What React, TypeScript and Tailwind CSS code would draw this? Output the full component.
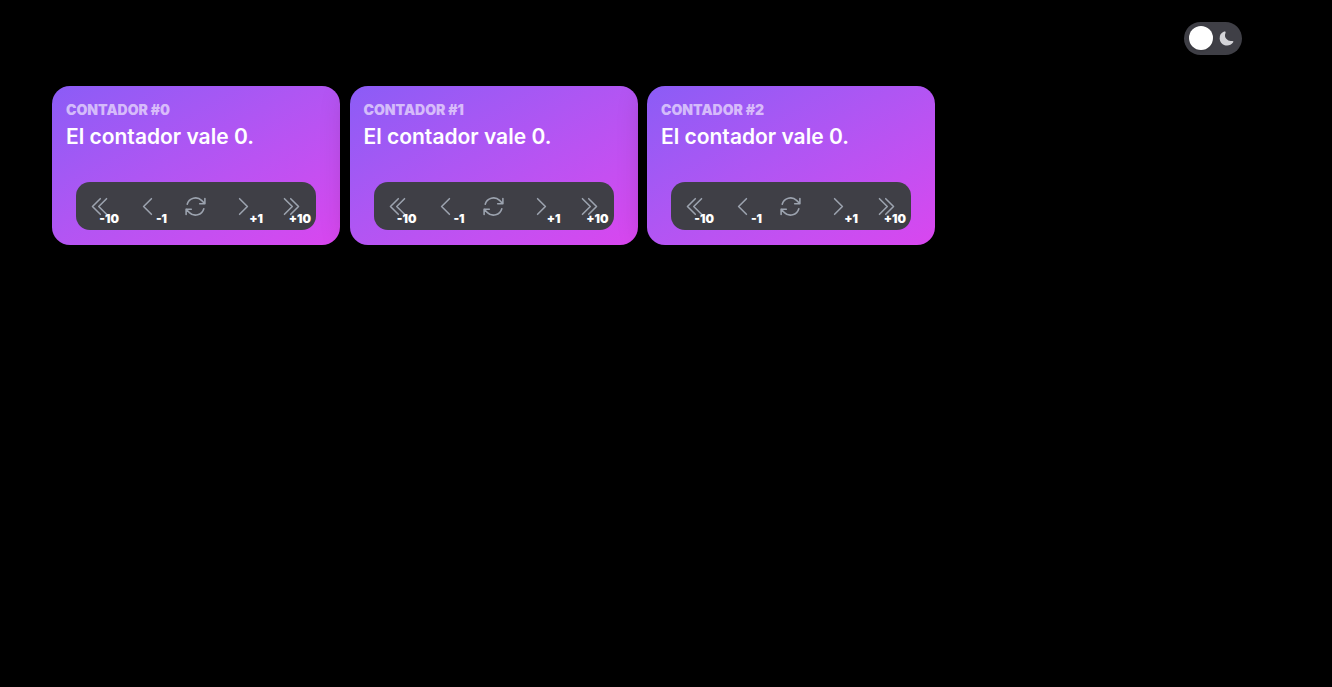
import { useState } from "react";
import type { ReactNode } from "react";

const paths = {
  back10: "m18.75 4.5-7.5 7.5 7.5 7.5m-6-15L5.25 12l7.5 7.5",
  back1: "M15.75 19.5 8.25 12l7.5-7.5",
  reset:
    "M16.023 9.348h4.992v-.001M2.985 19.644v-4.992m0 0h4.992m-4.993 0 3.181 3.183a8.25 8.25 0 0 0 13.803-3.7M4.031 9.865a8.25 8.25 0 0 1 13.803-3.7l3.181 3.182m0-4.991v4.99",
  next1: "m8.25 4.5 7.5 7.5-7.5 7.5",
  next10: "m5.25 4.5 7.5 7.5-7.5 7.5m6-15 7.5 7.5-7.5 7.5",
};

function Icon({ d }: { d: string }) {
  return (
    <svg
      className="size-[25px] text-[#9ca3af]"
      viewBox="0 0 24 24"
      fill="none"
      stroke="currentColor"
      strokeWidth="1.5"
      strokeLinecap="round"
      strokeLinejoin="round"
      aria-hidden="true"
    >
      <path d={d} />
    </svg>
  );
}

type StepProps = { label: string; onClick: () => void; badge?: string; children: ReactNode };

function StepButton({ label, onClick, badge, children }: StepProps) {
  return (
    <button
      type="button"
      aria-label={label}
      onClick={onClick}
      className="relative flex size-12 cursor-pointer items-center justify-center pt-px pr-px"
    >
      {children}
      {badge && (
        <span className="absolute right-[5px] bottom-[3px] text-xs font-black text-white">
          {badge}
        </span>
      )}
    </button>
  );
}

function Counter({ id }: { id: number }) {
  const [value, setValue] = useState(0);
  const add = (n: number) => setValue((v) => v + n);
  return (
    <article className="w-72 rounded-[18px] bg-linear-to-br from-[#8b5cf6] to-[#d946ef] px-3.5 pt-3.5 pb-[15px] shadow-[0_0_15px_0_rgba(0,0,0,0.06),0_2px_30px_0_rgba(0,0,0,0.22)]">
      <p className="text-sm font-black text-white/60 uppercase">Contador #{id}</p>
      <h2 className="mt-px text-[21px] leading-8 font-semibold text-white">
        El contador vale {value}.
      </h2>
      <div className="mx-auto mt-[29px] flex w-60 rounded-[14px] bg-[#3f3f46]">
        <StepButton label="Restar 10" badge="-10" onClick={() => add(-10)}>
          <Icon d={paths.back10} />
        </StepButton>
        <StepButton label="Restar 1" badge="-1" onClick={() => add(-1)}>
          <Icon d={paths.back1} />
        </StepButton>
        <StepButton label="Reiniciar" onClick={() => setValue(0)}>
          <Icon d={paths.reset} />
        </StepButton>
        <StepButton label="Sumar 1" badge="+1" onClick={() => add(1)}>
          <Icon d={paths.next1} />
        </StepButton>
        <StepButton label="Sumar 10" badge="+10" onClick={() => add(10)}>
          <Icon d={paths.next10} />
        </StepButton>
      </div>
    </article>
  );
}

function ThemeSwitch() {
  return (
    <label className="flex h-[33px] w-[58px] cursor-pointer items-center justify-between rounded-full bg-[#3f3f46] pr-[7px] pb-px pl-[5px]">
      <input type="checkbox" role="switch" aria-label="Tema claro" className="peer sr-only" />
      <span className="size-6 rounded-full bg-white shadow-sm peer-checked:order-last" />
      <svg className="size-[17px]" viewBox="0 0 24 24" fill="#d4d4d8" aria-hidden="true">
        <path d="M21.53 15.93c-.16-.27-.61-.69-1.73-.49a8.46 8.46 0 0 1-1.88.13 8.409 8.409 0 0 1-5.91-2.82 8.068 8.068 0 0 1-1.44-8.66c.44-1.01.13-1.54-.09-1.76s-.77-.55-1.83-.11a10.318 10.318 0 0 0-6.32 10.21 10.475 10.475 0 0 0 7.04 8.99 10 10 0 0 0 2.89.55c.16.01.32.02.48.02a10.5 10.5 0 0 0 8.47-4.27c.67-.93.49-1.519.32-1.79z" />
      </svg>
    </label>
  );
}

export default function App() {
  return (
    <div className="min-h-screen bg-black pr-[90px] pl-[52px] font-[Inter,sans-serif]">
      <header className="flex justify-end pt-[22px] pb-[31px]">
        <ThemeSwitch />
      </header>
      <main className="grid grid-cols-[repeat(auto-fill,minmax(290px,1fr))] gap-y-2.5">
        <Counter id={0} />
        <Counter id={1} />
        <Counter id={2} />
      </main>
    </div>
  );
}
